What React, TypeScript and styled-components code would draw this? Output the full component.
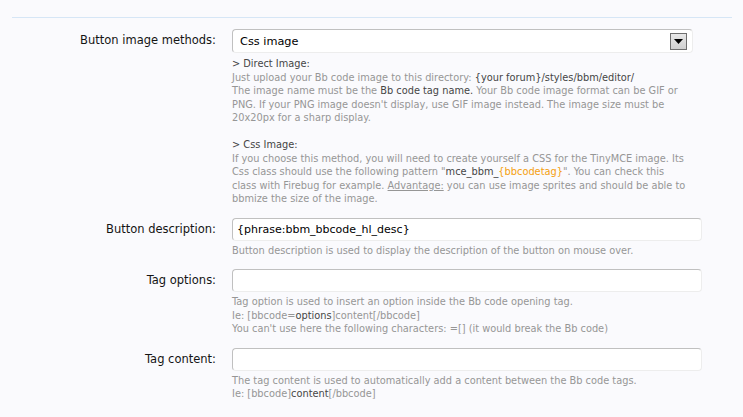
import React from "react"
import styled, { createGlobalStyle } from "styled-components"

const GlobalStyle = createGlobalStyle`
  html, body {
    margin: 0;
    padding: 0;
    background: #fafafd;
  }
  body {
    font-family: "DejaVu Sans", Verdana, sans-serif;
  }
`

const Page = styled.div`
  padding: 17px 11px 0 12px;
`

const Divider = styled.div`
  border-top: 1px solid #d6e6f6;
`

const FormList = styled.div`
  display: flex;
  flex-direction: column;
  gap: 12px;
  padding-top: 11px;
`

const Row = styled.div`
  display: grid;
  grid-template-columns: 204px 470px;
  column-gap: 16px;
`

const Label = styled.div`
  text-align: right;
  font-size: 11.5px;
  line-height: 23px;
  color: #141414;
`

const Control = styled.div`
  display: flex;
  flex-direction: column;
`

const TextBox = styled.div<{ $width?: number; $height?: number }>`
  box-sizing: border-box;
  width: ${(p) => p.$width || 470}px;
  height: ${(p) => p.$height || 23}px;
  display: flex;
  align-items: center;
  padding: 0 3px 0 4px;
  background: #fff;
  border: 1px solid;
  border-color: #c0c0c0 #ededed #ededed #c0c0c0;
  border-radius: 4px;
  font-size: 11px;
  color: #000;
`

const SelectText = styled.span`
  padding-left: 3px;
  font-size: 11.3px;
`

const DropButton = styled.span`
  box-sizing: border-box;
  margin-left: auto;
  margin-right: 2px;
  width: 17px;
  height: 17px;
  border: 1px solid #6f6f6f;
  background: linear-gradient(#e8e8e8, #d0d0d0);
  display: flex;
  align-items: center;
  justify-content: center;
`

const Hint = styled.div<{ $top?: number }>`
  margin-top: ${(p) => p.$top ?? 3}px;
  font-size: 9.8px;
  line-height: 13.5px;
  color: #969696;
  white-space: nowrap;
`

const Dark = styled.span`
  color: #454545;
`

const Orange = styled.span`
  color: #f5a00f;
`

const Underline = styled.span`
  text-decoration: underline;
`

const Arrow = () => (
  <svg width="9" height="5" viewBox="0 0 9 5">
    <path d="M0 0h9L4.5 5z" fill="#000" />
  </svg>
)

export default function App() {
  return (
    <Page>
      <GlobalStyle />
      <Divider />
      <FormList>
        <Row>
          <Label>Button image methods:</Label>
          <Control>
            <TextBox $width={461} $height={24}>
              <SelectText>Css image</SelectText>
              <DropButton>
                <Arrow />
              </DropButton>
            </TextBox>
            <Hint $top={4}>
              <Dark>&gt; Direct Image:</Dark>
              <br />
              Just upload your Bb code image to this directory:{" "}
              <Dark>{"{your forum}"}/styles/bbm/editor/</Dark>
              <br />
              The image name must be the <Dark>Bb code tag name.</Dark> Your Bb code image format can be GIF or
              <br />
              PNG. If your PNG image doesn't display, use GIF image instead. The image size must be
              <br />
              20x20px for a sharp display.
              <br />
              <br />
              <Dark>&gt; Css Image:</Dark>
              <br />
              If you choose this method, you will need to create yourself a CSS for the TinyMCE image. Its
              <br />
              Css class should use the following pattern "<Dark>mce_bbm_</Dark>
              <Orange>{"{bbcodetag}"}</Orange>". You can check this
              <br />
              class with Firebug for example. <Underline>Advantage:</Underline> you can use image sprites and should be able to
              <br />
              bbmize the size of the image.
            </Hint>
          </Control>
        </Row>

        <Row>
          <Label>Button description:</Label>
          <Control>
            <TextBox>{"{phrase:bbm_bbcode_hl_desc}"}</TextBox>
            <Hint>Button description is used to display the description of the button on mouse over.</Hint>
          </Control>
        </Row>

        <Row>
          <Label>Tag options:</Label>
          <Control>
            <TextBox />
            <Hint>
              Tag option is used to insert an option inside the Bb code opening tag.
              <br />
              Ie: [bbcode=<Dark>options</Dark>]content[/bbcode]
              <br />
              You can't use here the following characters: =[] (it would break the Bb code)
            </Hint>
          </Control>
        </Row>

        <Row>
          <Label>Tag content:</Label>
          <Control>
            <TextBox />
            <Hint>
              The tag content is used to automatically add a content between the Bb code tags.
              <br />
              Ie: [bbcode]<Dark>content</Dark>[/bbcode]
            </Hint>
          </Control>
        </Row>
      </FormList>
    </Page>
  )
}
